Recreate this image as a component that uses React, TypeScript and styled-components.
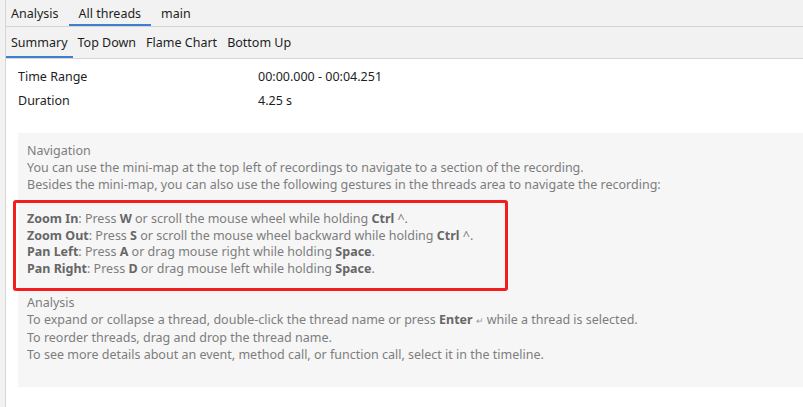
import styled, { createGlobalStyle } from "styled-components";

const GlobalStyle = createGlobalStyle`
  html, body {
    margin: 0;
    padding: 0;
    background: #f2f2f2;
    font-family: "Noto Sans", "Open Sans", sans-serif;
    overflow: hidden;
  }
`;

const Page = styled.div`
  display: flex;
  height: 407px;
  padding-left: 5px;
  background: #f2f2f2;
`;

const Main = styled.div`
  flex: 1;
  display: flex;
  flex-direction: column;
  border-left: 1px solid #d6d6d6;
  background: #fff;
  min-width: 0;
`;

const TabBar = styled.div<{ $height: number }>`
  display: flex;
  height: ${(p) => p.$height}px;
  background: #f2f2f2;
  border-bottom: 1px solid #d4d4d4;
`;

const Tab = styled.div<{ $active?: boolean; $pad: number; $first?: number }>`
  position: relative;
  display: flex;
  align-items: center;
  padding: 0 ${(p) => p.$pad}px;
  &:first-child {
    padding-left: ${(p) => p.$first ?? p.$pad}px;
  }
  font-size: 12.5px;
  color: #1e1e1e;
  white-space: nowrap;
  &::after {
    content: "";
    position: absolute;
    left: 0;
    right: 0;
    bottom: 0;
    height: 2px;
    background: ${(p) => (p.$active ? "#3f80cd" : "transparent")};
  }
`;

const Content = styled.div`
  flex: 1;
  padding: 5px 0 0 12px;
`;

const InfoRow = styled.div`
  display: flex;
  height: 24px;
  align-items: center;
  font-size: 12.5px;
  color: #1e1e1e;
`;

const InfoLabel = styled.div`
  width: 240px;
`;

const Panel = styled.div`
  margin-top: 21px;
  height: 254px;
  box-sizing: border-box;
  padding: 10px 0 0 9px;
  background: #f6f6f6;
  font-size: 12.5px;
  line-height: 16.9px;
  color: #7d7d7d;
  white-space: nowrap;
`;

const Line = styled.div``;

const Gap = styled.div`
  height: 16.9px;
`;

const Key = styled.b`
  color: #676767;
  font-weight: 700;
`;

const EnterGlyph = styled.span`
  font-size: 9px;
  color: #999;
  margin: 0 3px;
`;

const Shortcuts = styled.div`
  position: relative;
`;

const Highlight = styled.div`
  position: absolute;
  left: -14px;
  top: -11px;
  width: 495px;
  height: 91px;
  box-sizing: border-box;
  border: 3px solid #f41c1c;
  border-radius: 3px;
  pointer-events: none;
`;

const mainTabs = ["Analysis", "All threads", "main"];
const subTabs = ["Summary", "Top Down", "Flame Chart", "Bottom Up"];

export default function App() {
  return (
    <>
      <GlobalStyle />
      <Page>
        <Main>
          <TabBar $height={26}>
            {mainTabs.map((t) => (
              <Tab key={t} $pad={10} $first={5} $active={t === "All threads"}>
                {t}
              </Tab>
            ))}
          </TabBar>
          <TabBar $height={31}>
            {subTabs.map((t) => (
              <Tab key={t} $pad={5} $active={t === "Summary"}>
                {t}
              </Tab>
            ))}
          </TabBar>
          <Content>
            <InfoRow>
              <InfoLabel>Time Range</InfoLabel>
              <div>00:00.000 - 00:04.251</div>
            </InfoRow>
            <InfoRow>
              <InfoLabel>Duration</InfoLabel>
              <div>4.25 s</div>
            </InfoRow>
            <Panel>
              <Line>Navigation</Line>
              <Line>You can use the mini-map at the top left of recordings to navigate to a section of the recording.</Line>
              <Line>Besides the mini-map, you can also use the following gestures in the threads area to navigate the recording:</Line>
              <Gap />
              <Shortcuts>
                <Line>
                  <Key>Zoom In</Key>: Press <Key>W</Key> or scroll the mouse wheel while holding <Key>Ctrl</Key> ^.
                </Line>
                <Line>
                  <Key>Zoom Out</Key>: Press <Key>S</Key> or scroll the mouse wheel backward while holding <Key>Ctrl</Key> ^.
                </Line>
                <Line>
                  <Key>Pan Left</Key>: Press <Key>A</Key> or drag mouse right while holding <Key>Space</Key>.
                </Line>
                <Line>
                  <Key>Pan Right</Key>: Press <Key>D</Key> or drag mouse left while holding <Key>Space</Key>.
                </Line>
                <Highlight />
              </Shortcuts>
              <Gap />
              <Line>Analysis</Line>
              <Line>
                To expand or collapse a thread, double-click the thread name or press <Key>Enter</Key>
                <EnterGlyph>↵</EnterGlyph>while a thread is selected.
              </Line>
              <Line>To reorder threads, drag and drop the thread name.</Line>
              <Line>To see more details about an event, method call, or function call, select it in the timeline.</Line>
            </Panel>
          </Content>
        </Main>
      </Page>
    </>
  );
}
